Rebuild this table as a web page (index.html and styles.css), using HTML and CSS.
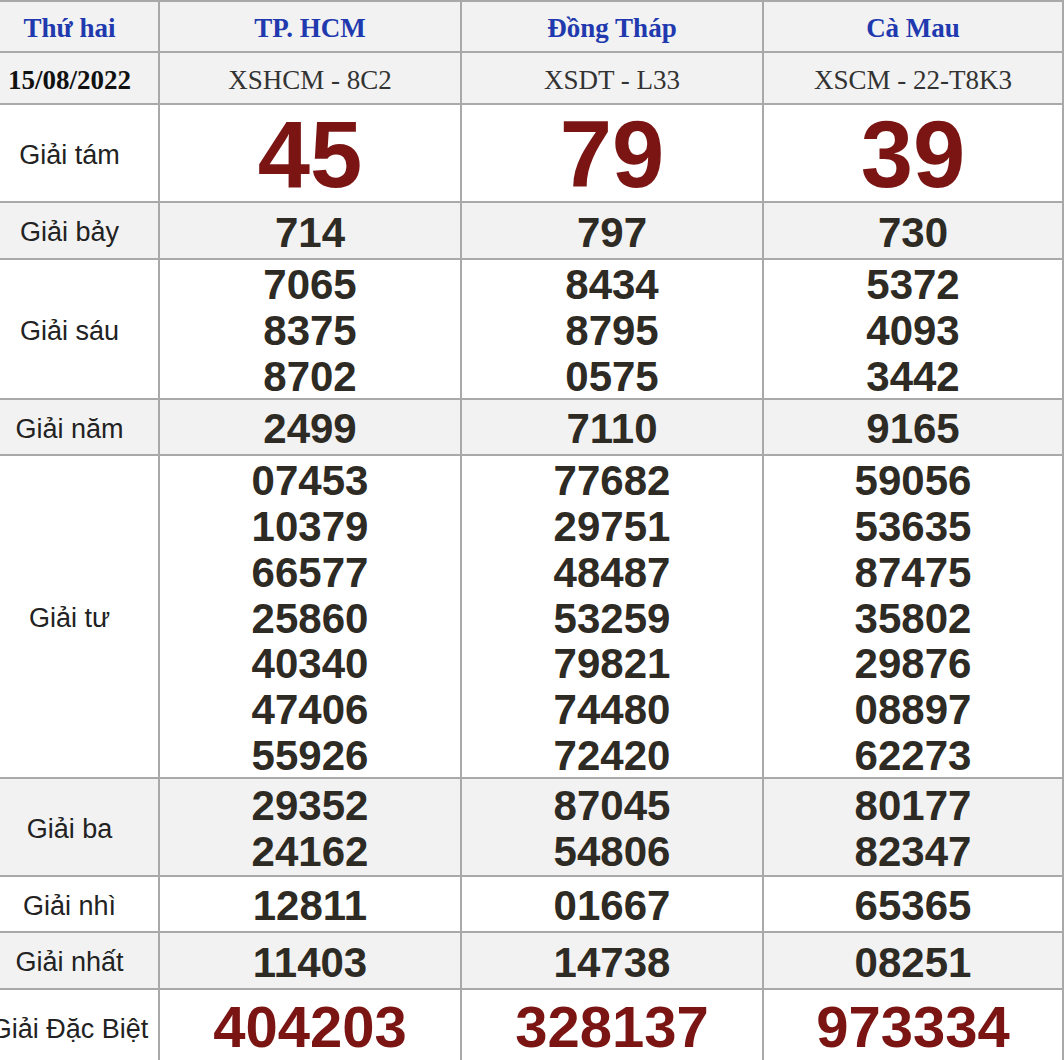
FILE: index.html
```html
<!DOCTYPE html>
<html lang="vi">
<head>
<meta charset="utf-8">
<title>Kết quả xổ số 15/08/2022</title>
<link rel="stylesheet" href="styles.css">
</head>
<body>
<div class="board">
  <div class="c hd g">Thứ hai</div>
  <div class="c hd g">TP. HCM</div>
  <div class="c hd g">Đồng Tháp</div>
  <div class="c hd g">Cà Mau</div>

  <div class="c date g">15/08/2022</div>
  <div class="c code g">XSHCM - 8C2</div>
  <div class="c code g">XSDT - L33</div>
  <div class="c code g">XSCM - 22-T8K3</div>

  <div class="c lbl">Giải tám</div>
  <div class="c num big">45</div>
  <div class="c num big">79</div>
  <div class="c num big">39</div>

  <div class="c lbl g">Giải bảy</div>
  <div class="c num g"><span>714</span></div>
  <div class="c num g"><span>797</span></div>
  <div class="c num g"><span>730</span></div>

  <div class="c lbl">Giải sáu</div>
  <div class="c num"><span>7065</span><span>8375</span><span>8702</span></div>
  <div class="c num"><span>8434</span><span>8795</span><span>0575</span></div>
  <div class="c num"><span>5372</span><span>4093</span><span>3442</span></div>

  <div class="c lbl g">Giải năm</div>
  <div class="c num g"><span>2499</span></div>
  <div class="c num g"><span>7110</span></div>
  <div class="c num g"><span>9165</span></div>

  <div class="c lbl">Giải tư</div>
  <div class="c num"><span>07453</span><span>10379</span><span>66577</span><span>25860</span><span>40340</span><span>47406</span><span>55926</span></div>
  <div class="c num"><span>77682</span><span>29751</span><span>48487</span><span>53259</span><span>79821</span><span>74480</span><span>72420</span></div>
  <div class="c num"><span>59056</span><span>53635</span><span>87475</span><span>35802</span><span>29876</span><span>08897</span><span>62273</span></div>

  <div class="c lbl g">Giải ba</div>
  <div class="c num g"><span>29352</span><span>24162</span></div>
  <div class="c num g"><span>87045</span><span>54806</span></div>
  <div class="c num g"><span>80177</span><span>82347</span></div>

  <div class="c lbl">Giải nhì</div>
  <div class="c num"><span>12811</span></div>
  <div class="c num"><span>01667</span></div>
  <div class="c num"><span>65365</span></div>

  <div class="c lbl g">Giải nhất</div>
  <div class="c num g"><span>11403</span></div>
  <div class="c num g"><span>14738</span></div>
  <div class="c num g"><span>08251</span></div>

  <div class="c lbl">Giải Đặc Biệt</div>
  <div class="c num db">404203</div>
  <div class="c num db">328137</div>
  <div class="c num db">973334</div>
</div>
</body>
</html>
```
FILE: styles.css
```css
html, body {
  margin: 0;
  padding: 0;
  overflow: hidden;
  background: #ffffff;
}

.board {
  display: grid;
  grid-template-columns: 177px 300px 300px 298px;
  grid-template-rows: 49px 50px 96px 55px 138px 54px 321px 96px 54px 55px 74px;
  gap: 2px;
  padding: 2px;
  margin-left: -21px;
  width: max-content;
  background: #a9a9a9;
}

.c {
  background: #ffffff;
  display: flex;
  flex-direction: column;
  align-items: center;
  justify-content: center;
  text-align: center;
  white-space: nowrap;
  padding-top: 4px;
  box-sizing: border-box;
}

.c.g {
  background: #f2f2f2;
}

.hd {
  font-family: "Liberation Serif", "Times New Roman", serif;
  font-weight: bold;
  font-size: 27px;
  color: #2139ae;
}

.date {
  font-family: "Liberation Serif", "Times New Roman", serif;
  font-weight: bold;
  font-size: 27px;
  color: #111111;
}

.code {
  font-family: "Liberation Serif", "Times New Roman", serif;
  font-size: 27px;
  color: #333333;
}

.lbl {
  font-family: "Liberation Sans", Arial, sans-serif;
  font-size: 27px;
  color: #222222;
}

.num {
  font-family: "Liberation Sans", Arial, sans-serif;
  font-weight: bold;
  font-size: 42px;
  line-height: 45.8px;
  color: #2e2a24;
}

.num span {
  display: block;
}

.num.big {
  font-size: 94px;
  line-height: 92px;
  color: #7a1513;
}

.num.db {
  font-size: 58px;
  line-height: 66px;
  padding-top: 0;
  color: #7a1513;
}
```
